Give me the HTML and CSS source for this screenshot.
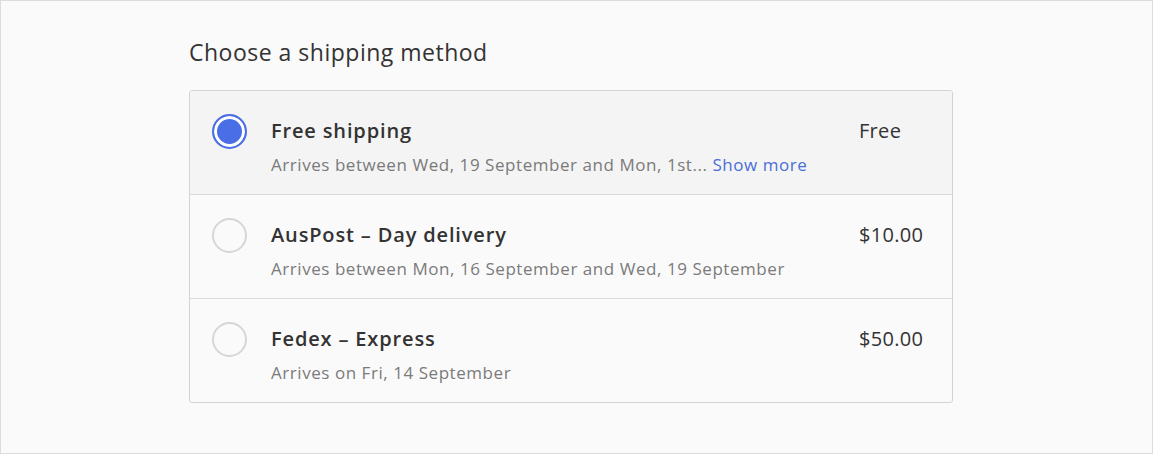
FILE: index.html
```html
<!DOCTYPE html>
<html lang="en">
<head>
  <meta charset="UTF-8" />
  <meta name="viewport" content="width=device-width, initial-scale=1.0"/>
  <title>shipping</title>
  <link rel="stylesheet" href="styles.css">
</head>
<body>
  <div class="page">
    <h2 class="heading">Choose a shipping method</h2>

    <div class="methods">
      <label class="method selected">
        <input type="radio" name="shipping" class="radio" checked />
        <div class="method-info">
          <span class="method-name">Free shipping</span>
          <span class="method-eta">Arrives between Wed, 19 September and Mon, 1st... <a href="#" class="show-more">Show more</a></span>
        </div>
        <span class="method-price">Free</span>
      </label>

      <label class="method">
        <input type="radio" name="shipping" class="radio" />
        <div class="method-info">
          <span class="method-name">AusPost – Day delivery</span>
          <span class="method-eta">Arrives between Mon, 16 September and Wed, 19 September</span>
        </div>
        <span class="method-price">$10.00</span>
      </label>

      <label class="method">
        <input type="radio" name="shipping" class="radio" />
        <div class="method-info">
          <span class="method-name">Fedex – Express</span>
          <span class="method-eta">Arrives on Fri, 14 September</span>
        </div>
        <span class="method-price">$50.00</span>
      </label>
    </div>
  </div>
</body>
</html>
```

FILE: styles.css
```css
*, *::before, *::after {
  box-sizing: border-box;
}

body {
  margin: 0;
  background-color: #fafafa;
  font-family: 'Open Sans', sans-serif;
  color: #333;
}

.page {
  height: 454px;
  border: 1px solid #dcdcdc;
  padding: 36px 0 0 188px;
}

.heading {
  margin: 0 0 23px 0;
  font-size: 23px;
  font-weight: 400;
  line-height: 30px;
  letter-spacing: 0.5px;
  color: #333;
}

.methods {
  width: 764px;
  border: 1px solid #d4d4d4;
  border-radius: 3px;
  overflow: hidden;
}

.method {
  display: flex;
  align-items: flex-start;
  padding: 23px 22px 17px 22px;
  border-bottom: 1px solid #dadada;
  cursor: pointer;
}

.method:last-child {
  border-bottom: none;
}

.method.selected {
  background-color: #f4f4f4;
}

.radio {
  appearance: none;
  -webkit-appearance: none;
  margin: 0 24px 0 0;
  width: 35px;
  height: 35px;
  flex-shrink: 0;
  border: 2px solid #d6d6d6;
  border-radius: 50%;
  background-color: #fafafa;
  cursor: pointer;
}

.radio:checked {
  border-color: #4a6ee6;
  background-color: #4a6ee6;
  box-shadow: inset 0 0 0 3px #fff;
}

.method-info {
  flex: 1;
  display: flex;
  flex-direction: column;
}

.method-name {
  font-size: 20px;
  font-weight: 600;
  line-height: 34px;
  letter-spacing: 0.85px;
  color: #333;
}

.method-eta {
  margin-top: 5px;
  font-size: 17px;
  line-height: 24px;
  letter-spacing: 0.55px;
  color: #7a7a7a;
}

.show-more {
  color: #4a6ed8;
  text-decoration: none;
}

.method-price {
  width: 71px;
  font-size: 20px;
  line-height: 34px;
  letter-spacing: 0.3px;
  color: #333;
}
```
